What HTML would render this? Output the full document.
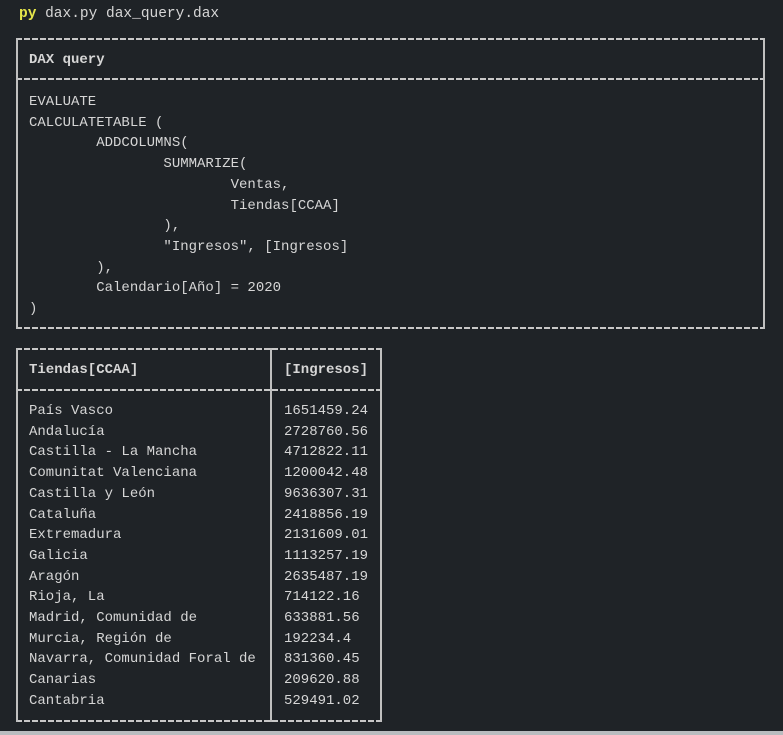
<!DOCTYPE html>
<html><head><meta charset="utf-8"><style>
html,body{margin:0;padding:0}
body{width:783px;height:735px;background:#1f2327;position:relative;overflow:hidden;font-family:"Liberation Mono",monospace;font-size:14px;color:#d6d6d6}
.a{position:absolute;white-space:pre;line-height:20.7px}
.h{position:absolute;height:2px;background:repeating-linear-gradient(90deg,#c8c8c8 0 6px,transparent 6px 8px)}
.v{position:absolute;border-left:2px solid #c0c0c0}
b{font-weight:bold}
</style></head><body>
<div class="a" style="left:19px;top:4px;font-size:14.5px"><span style="color:#e5e54a;font-weight:bold">py</span> dax.py dax_query.dax</div>

<div class="h" style="left:16px;top:38px;width:749px"></div>
<div class="h" style="left:16px;top:78px;width:749px"></div>
<div class="h" style="left:16px;top:327px;width:749px"></div>
<div class="v" style="left:16px;top:38px;height:291px"></div>
<div class="v" style="left:763px;top:38px;height:291px"></div>
<div class="a" style="left:29px;top:50px"><b>DAX query</b></div>
<div class="a" style="left:29px;top:92px">EVALUATE
CALCULATETABLE (
        ADDCOLUMNS(
                SUMMARIZE(
                        Ventas,
                        Tiendas[CCAA]
                ),
                "Ingresos", [Ingresos]
        ),
        Calendario[Año] = 2020
)</div>

<div class="h" style="left:16px;top:348px;width:366px"></div>
<div class="h" style="left:16px;top:389px;width:366px"></div>
<div class="h" style="left:16px;top:720px;width:366px"></div>
<div class="v" style="left:16px;top:348px;height:374px"></div>
<div class="v" style="left:270px;top:348px;height:374px"></div>
<div class="v" style="left:380px;top:348px;height:374px"></div>
<div class="a" style="left:29px;top:360px"><b>Tiendas[CCAA]</b></div>
<div class="a" style="left:284px;top:360px"><b>[Ingresos]</b></div>
<div class="a" style="left:29px;top:401px">País Vasco
Andalucía
Castilla - La Mancha
Comunitat Valenciana
Castilla y León
Cataluña
Extremadura
Galicia
Aragón
Rioja, La
Madrid, Comunidad de
Murcia, Región de
Navarra, Comunidad Foral de
Canarias
Cantabria</div>
<div class="a" style="left:284px;top:401px">1651459.24
2728760.56
4712822.11
1200042.48
9636307.31
2418856.19
2131609.01
1113257.19
2635487.19
714122.16
633881.56
192234.4
831360.45
209620.88
529491.02</div>
<div style="position:absolute;left:0;top:731px;width:783px;height:4px;background:#b9bcbf"></div>
</body></html>
